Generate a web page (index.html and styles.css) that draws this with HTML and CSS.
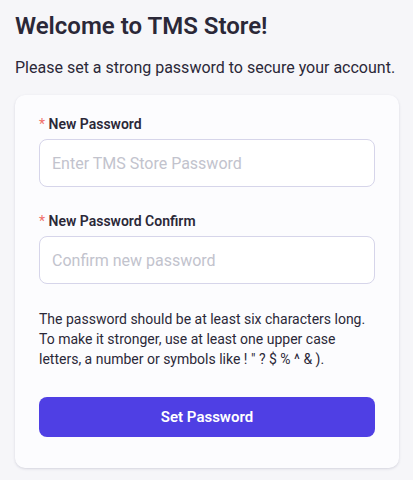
FILE: index.html
```html
<!DOCTYPE html>
<html>
<head>
<meta charset="utf-8">
<link rel="stylesheet" href="styles.css">
</head>
<body>
<div class="page">
  <h1 class="title">Welcome to TMS Store!</h1>
  <p class="subtitle">Please set a strong password to secure your account.</p>
  <form class="card">
    <div class="field">
      <label class="label"><span class="req">*</span> New Password</label>
      <input class="input" type="password" placeholder="Enter TMS Store Password">
    </div>
    <div class="field">
      <label class="label"><span class="req">*</span> New Password Confirm</label>
      <input class="input" type="password" placeholder="Confirm new password">
    </div>
    <p class="help">The password should be at least six characters long. To make it stronger, use at least one upper case letters, a number or symbols like ! " ? $ % ^ &amp; ).</p>
    <button class="btn" type="button">Set Password</button>
  </form>
</div>
</body>
</html>
```
FILE: styles.css
```css
* { box-sizing: border-box; }
html, body { margin: 0; padding: 0; }
body {
  background: #f6f6f9;
  font-family: Roboto, "Liberation Sans", sans-serif;
  color: #2b2838;
}
.page {
  padding: 10px 14px 12px 15px;
}
.title {
  margin: 0;
  font-size: 24px;
  line-height: 32px;
  font-weight: 600;
  color: #2b2838;
}
.subtitle {
  margin: 14px 0 15px;
  font-size: 16px;
  line-height: 24px;
  color: #2b2838;
}
.card {
  background: #fcfcfe;
  border-radius: 10px;
  box-shadow: 0 1px 3px rgba(60, 60, 100, 0.12), 0 1px 2px rgba(60,60,100,0.06);
  padding: 19px 24px 31px;
  display: flex;
  flex-direction: column;
}
.field {
  display: flex;
  flex-direction: column;
  gap: 5px;
  margin-bottom: 24px;
}
.label {
  font-size: 14px;
  line-height: 20px;
  font-weight: 600;
  color: #2b2838;
}
.req {
  color: #f0706a;
  font-weight: 400;
}
.input {
  height: 48px;
  border: 1px solid #d6d5ea;
  border-radius: 8px;
  background: #ffffff;
  padding: 0 12px;
  font-family: inherit;
  font-size: 16px;
  color: #2b2838;
  outline: none;
}
.input::placeholder { color: #c2c3cd; }
.help {
  margin: 1px 0 28px;
  font-size: 14px;
  line-height: 20px;
  color: #2b2838;
}
.btn {
  height: 40px;
  border: none;
  border-radius: 8px;
  background: #4f3fe4;
  color: #ffffff;
  font-family: inherit;
  font-size: 15px;
  font-weight: 600;
}
```
